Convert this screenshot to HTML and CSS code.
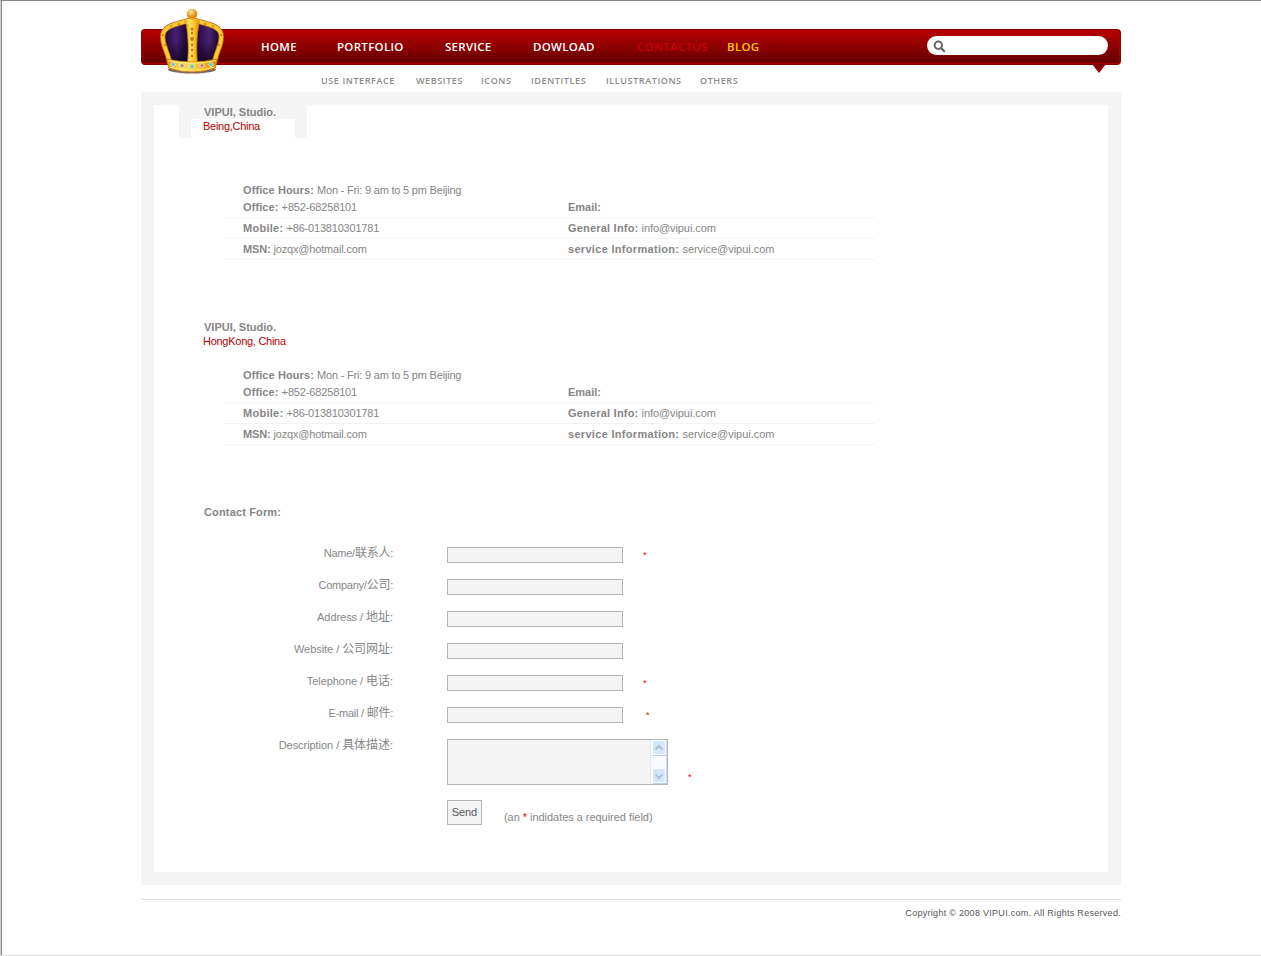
FILE: index.html
```html
<!DOCTYPE html>
<html lang="en">
<head>
<meta charset="utf-8">
<title>VIPUI Studio - Contact</title>
<link rel="stylesheet" href="styles.css">
</head>
<body>
<div class="window">
<div class="page">
  <header class="header">
    <nav class="nav">
      <a class="home">HOME</a><a class="portfolio">PORTFOLIO</a><a class="service">SERVICE</a><a class="download">DOWLOAD</a><a class="contact">CONTACTUS</a><a class="blog">BLOG</a>
    </nav>
    <div class="search">
      <svg width="13" height="13" viewBox="0 0 13 13"><circle cx="5.3" cy="5.2" r="3.7" fill="none" stroke="#666" stroke-width="2"/><path d="M8 8L11 11" stroke="#666" stroke-width="2.4" stroke-linecap="round"/></svg>
    </div>
    <svg class="pointer" width="14" height="10" viewBox="0 0 14 10"><path d="M0 0H14L7 9Z" fill="#7b0000"/><path d="M1.500 .5L7 7.500L12.500 .5" fill="none" stroke="#b90000"/></svg>
    <svg class="crown" width="68" height="67" viewBox="0 0 68 67">
      <defs>
        <linearGradient id="gold" x1="0" x2="1"><stop offset="0" stop-color="#e99a14"/><stop offset=".3" stop-color="#ffe35a"/><stop offset=".65" stop-color="#fbc12b"/><stop offset="1" stop-color="#d98709"/></linearGradient>
        <radialGradient id="ball" cx=".4" cy=".3"><stop offset="0" stop-color="#fff0a0"/><stop offset="1" stop-color="#e28a12"/></radialGradient>
        <linearGradient id="velvet" x1="0" x2="1"><stop offset="0" stop-color="#1b0633"/><stop offset=".22" stop-color="#4a2072"/><stop offset=".4" stop-color="#1c0538"/><stop offset=".62" stop-color="#2c0c4e"/><stop offset=".8" stop-color="#4a2370"/><stop offset="1" stop-color="#170326"/></linearGradient>
        <linearGradient id="shade" x1="0" x2="0" y1="0" y2="1"><stop offset=".5" stop-color="#10021f" stop-opacity="0"/><stop offset="1" stop-color="#10021f" stop-opacity=".85"/></linearGradient>
      </defs>
      <ellipse cx="33" cy="62.500" rx="24" ry="4" fill="#391516" opacity=".65"/>
      <path id="dome" d="M11 55C9 44 3 38 5 27C7 19 20 18 33 12C46 18 59 19 61 27C63 38 57 44 55 55Z" fill="url(#velvet)"/>
      <path d="M11 55C9 44 3 38 5 27C7 19 20 18 33 12C46 18 59 19 61 27C63 38 57 44 55 55Z" fill="url(#shade)"/>
      <path d="M10.500 56C9 44 2 37 4 27C6 18 20 17 31 13M55.500 56C57 44 64 37 62 27C60 18 46 17 35 13" fill="none" stroke="#b96b0e" stroke-width="5.400"/>
      <path d="M10.500 56C9 44 2 37 4 27C6 18 20 17 31 13M55.500 56C57 44 64 37 62 27C60 18 46 17 35 13" fill="none" stroke="#fdc937" stroke-width="3.800"/>
      <path d="M28.500 56C30 42 29 27 27 17C30 12 37 12 40 17C38 27 37 42 38.500 56Z" fill="url(#gold)" stroke="#c97b12" stroke-width=".7"/>
      <path d="M25 15C28 10 38 10 41 15L39 17H27Z" fill="url(#gold)"/>
      <circle cx="33" cy="7" r="5.300" fill="url(#ball)"/>
      <path d="M8 52Q33 58 58 52L56.500 61Q33 69 9.500 61Z" fill="url(#gold)" stroke="#cd7c0c" stroke-width=".8"/>
      <path d="M9 53.500Q33 59 57 53.500M10.500 60Q33 67 55.500 60" fill="none" stroke="#fff080"/>
      <g fill="#c4770e"><circle cx="33" cy="22" r="1.500"/><circle cx="33" cy="26" r="1.200"/><circle cx="33" cy="32" r="1.900"/><circle cx="33" cy="38" r="1.200"/><circle cx="33" cy="43" r="1.200"/><circle cx="33" cy="49" r="1.200"/><circle cx="4" cy="28" r="1"/><circle cx="6" cy="38" r="1"/><circle cx="62" cy="28" r="1"/><circle cx="60" cy="38" r="1"/><circle cx="12" cy="19" r="1"/><circle cx="20" cy="17" r="1"/><circle cx="54" cy="19" r="1"/><circle cx="46" cy="17" r="1"/></g>
      <g fill="#62cbd0" stroke="#fff0b0" stroke-width=".7"><path d="M14 55l2.500 2.500-2.500 2.500-2.500-2.500zM33 56.500l3 2.800-3 2.800-3-2.800zM52 55l2.500 2.500-2.500 2.500-2.500-2.500z"/></g>
      <g fill="#cf72ab" stroke="#fff0b0" stroke-width=".7"><circle cx="23" cy="58.700" r="2.100"/><circle cx="43" cy="58.700" r="2.100"/></g>
    </svg>
  </header>
  <nav class="subnav">
    <a class="s1">USE INTERFACE</a><a class="s2">WEBSITES</a><a class="s3">ICONS</a><a class="s4">IDENTITLES</a><a class="s5">ILLUSTRATIONS</a><a class="s6">OTHERS</a>
  </nav>
  <main class="panel">
    <section class="office">
      <div class="office-head tabbed"><b>VIPUI, Studio.</b><span class="city">Being,China</span></div>
      <div class="details">
        <div class="row hours"><div><b class="l-hours">Office Hours:</b> <span class="v-hours">Mon - Fri: 9 am to 5 pm Beijing</span></div></div>
        <div class="row first"><div><b class="l-office">Office:</b> <span class="v-office">+852-68258101</span></div><div><b>Email:</b></div></div>
        <div class="row"><div><b class="l-mobile">Mobile:</b> <span class="v-mobile">+86-013810301781</span></div><div><b class="l-info">General Info:</b> <span class="v-info">info@vipui.com</span></div></div>
        <div class="row"><div><b class="l-msn">MSN:</b> <span class="v-msn">jozqx@hotmail.com</span></div><div><b class="l-service">service Information:</b> <span class="v-service">service@vipui.com</span></div></div>
      </div>
    </section>
    <section class="office second">
      <div class="office-head"><b>VIPUI, Studio.</b><span class="city">HongKong, China</span></div>
      <div class="details">
        <div class="row hours"><div><b class="l-hours">Office Hours:</b> <span class="v-hours">Mon - Fri: 9 am to 5 pm Beijing</span></div></div>
        <div class="row first"><div><b class="l-office">Office:</b> <span class="v-office">+852-68258101</span></div><div><b>Email:</b></div></div>
        <div class="row"><div><b class="l-mobile">Mobile:</b> <span class="v-mobile">+86-013810301781</span></div><div><b class="l-info">General Info:</b> <span class="v-info">info@vipui.com</span></div></div>
        <div class="row"><div><b class="l-msn">MSN:</b> <span class="v-msn">jozqx@hotmail.com</span></div><div><b class="l-service">service Information:</b> <span class="v-service">service@vipui.com</span></div></div>
      </div>
    </section>
    <h2 class="form-title">Contact Form:</h2>
    <form class="form">
      <div class="field"><label class="tight">Name/<span class="cn">联系人</span>:</label><input type="text"><i>*</i></div>
      <div class="field"><label class="tight">Company/<span class="cn">公司</span>:</label><input type="text"></div>
      <div class="field"><label>Address / <span class="cn">地址</span>:</label><input type="text"></div>
      <div class="field"><label>Website / <span class="cn">公司网址</span>:</label><input type="text"></div>
      <div class="field"><label>Telephone / <span class="cn">电话</span>:</label><input type="text"><i>*</i></div>
      <div class="field email"><label class="tight">E-mail / <span class="cn">邮件</span>:</label><input type="text"><i>*</i></div>
      <div class="field area"><label>Description / <span class="cn">具体描述</span>:</label>
        <div class="textarea"><div class="scroll">
          <svg width="15" height="16" viewBox="0 0 15 16"><rect x=".5" y=".5" width="13" height="14" rx="1.500" fill="#d5e5fd" stroke="#fff"/><path d="M1 15.500H14" stroke="#b4cdec"/><path d="M3.500 9.500L7 6L10.500 9.500" fill="none" stroke="#abc2df" stroke-width="2"/></svg>
          <svg width="15" height="16" viewBox="0 0 15 16"><rect x=".5" y=".5" width="13" height="14" rx="1.500" fill="#d5e5fd" stroke="#fff"/><path d="M1 15.500H14" stroke="#b4cdec"/><path d="M3.500 6.500L7 10L10.500 6.500" fill="none" stroke="#abc2df" stroke-width="2"/></svg>
        </div></div><i>*</i></div>
      <div class="actions"><button type="button">Send</button><span class="note">(an <em>*</em> indidates a required field)</span></div>
    </form>
  </main>
  <footer class="footer">Copyright © 2008 VIPUI.com. All Rights Reserved.</footer>
</div>
</div>
</body>
</html>
```
FILE: styles.css
```css
* { box-sizing: border-box; }
body { margin: 0; background: #fff; color: #868686; font: 11px/14px "Liberation Sans", Arial, "Noto Sans CJK SC", sans-serif; }
.window { height: 956px; border-top: 1px solid #86848b; border-left: 1px solid #d4d0cc; border-bottom: 1px solid #e1e1e1; box-shadow: inset 1px 0 #86848b; overflow: hidden; }
.page { width: 980px; margin-left: 140px; padding-top: 28px; }

.header { position: relative; height: 36px; display: flex; justify-content: space-between; border: 1px solid #850000; border-bottom-color: #780000; border-radius: 4px; background: linear-gradient(#b80000, #6b0000 88%); box-shadow: inset 0 -1px #b00000, inset -1px 0 #a00000, inset 1px 0 #a00000; }
.nav { display: grid; grid-template-columns: 76px 108px 88px 104px 90px 60px; padding: 0 0 0 119px; font: 600 11.5px/34px "Open Sans", sans-serif; letter-spacing: .3px; color: #fff; white-space: nowrap; }
.contact { color: #c80000; }
.blog { color: #ffc800; }
.search { width: 181px; height: 19px; margin: 6px 12px 0 0; padding: 4px 6px; background: #fff; border-radius: 10px; line-height: 0; }
.pointer { position: absolute; right: 14px; top: 34px; }
.crown { position: absolute; left: 17px; top: -23px; }

.subnav { display: grid; grid-template-columns: 95px 65px 50px 75px 94px 60px; height: 27px; padding: 8px 0 0 180px; font: 600 9px/16px "Open Sans", sans-serif; letter-spacing: .6px; color: #8a8a8a; white-space: nowrap; }

.panel { height: 793px; border: 13px solid #f5f5f5; }
.office { height: 215px; }
.office-head { display: flex; flex-direction: column; padding: 0 0 0 50px; height: 28px; }
.city { margin-left: -1px; color: #b80000; letter-spacing: -.27px; }
.tabbed { width: 128px; height: 33px; margin-left: 25px; padding-left: 25px; border-radius: 0 0 4px 4px; background: linear-gradient(#fff, #fff) 12px 14px / 104px 19px no-repeat #f5f5f5; }
.details { width: 650px; margin: 44px 0 0 70px; }
.second { height: 185px; }
.second .details { margin-top: 19px; }
.row { display: grid; grid-template-columns: 325px 325px; height: 21px; padding: 3px 0 0 19px; border-bottom: 1px solid #f2f2f2; white-space: nowrap; }
.row.hours { height: 15px; padding-top: 1px; border: 0; }
.l-hours { letter-spacing: .1px; }
.v-hours { letter-spacing: -.2px; }
.l-office { letter-spacing: .1px; }
.v-office { letter-spacing: -.15px; }
.l-mobile { letter-spacing: .28px; }
.v-mobile { letter-spacing: -.2px; }
.l-msn { letter-spacing: -.15px; }
.v-msn { letter-spacing: -.18px; }
.l-info { letter-spacing: .2px; }
.v-info { letter-spacing: -.08px; }
.l-service { letter-spacing: .31px; }
.v-service { letter-spacing: -.03px; }
.form-title { margin: 0 0 0 50px; font-size: 11px; line-height: 14px; letter-spacing: .15px; }

.form { padding-top: 20px; }
.field { display: flex; height: 32px; }
label { width: 239px; padding-top: 7px; text-align: right; white-space: nowrap; letter-spacing: -.05px; }
.tight { letter-spacing: -.25px; }
.cn { font-size: 12px; line-height: 1; }
input { width: 176px; height: 16px; margin: 8px 0 0 54px; padding: 0 2px; border: 1px solid #b5b5b5; border-radius: 0; background: #f4f4f4; }
.field i { margin: 9px 0 0 20px; font-size: 9px; font-style: normal; color: #f00000; }
.field.email i { margin-left: 23px; }
.area { height: 61px; }
.textarea { width: 221px; height: 46px; margin: 8px 0 0 54px; border: 1px solid #b5b5b5; background: #f4f4f4; display: flex; justify-content: flex-end; }
.scroll { width: 17px; padding-left: 1px; display: flex; flex-direction: column; justify-content: space-between; background: #f8faff; border-left: 1px solid #e1ebfa; border-right: 1px solid #c6dcfb; }
.field.area i { margin-top: 39px; }
.actions { display: flex; padding: 8px 0 0 293px; }
button { width: 35px; height: 25px; padding: 0 0 2px; border: 1px solid #b5b5b5; border-radius: 0; background: #f4f4f4; color: #555; font: inherit; letter-spacing: -.1px; }
.note { margin: 10px 0 0 22px; letter-spacing: -.04px; }
.note em { color: #f00000; font-style: normal; }
.footer { margin-top: 14px; padding-top: 6px; border-top: 1px solid #e1e1e1; text-align: right; font-size: 9px; letter-spacing: .29px; color: #555; }
```
